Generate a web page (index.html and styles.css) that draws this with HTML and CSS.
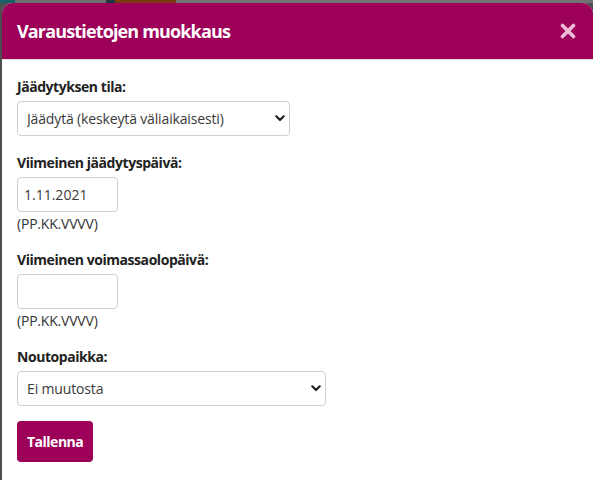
FILE: index.html
```html
<!DOCTYPE html>
<html lang="fi">
<head>
<meta charset="utf-8">
<title>Varaustietojen muokkaus</title>
<link rel="stylesheet" href="styles.css">
</head>
<body>
<div class="modal">
  <div class="modal-header">
    <h4 class="modal-title">Varaustietojen muokkaus</h4>
    <button class="close" type="button" aria-label="Sulje">
      <svg width="16" height="16" viewBox="0 0 16 16"><path d="M2.5 2.5 L13.5 13.5 M13.5 2.5 L2.5 13.5" stroke="currentColor" stroke-width="3.6" stroke-linecap="round"/></svg>
    </button>
  </div>
  <div class="modal-body">
    <div class="field">
      <label class="label">Jäädytyksen tila:</label>
      <div class="select-wrap select-wide">
        <select class="control"><option>Jäädytä (keskeytä väliaikaisesti)</option></select>
        <svg class="chevron" width="10" height="7" viewBox="0 0 10 7"><path d="M1.3 1.3 L5 5 L8.7 1.3" fill="none" stroke="#222" stroke-width="2.2" stroke-linecap="round" stroke-linejoin="round"/></svg>
      </div>
    </div>
    <div class="field">
      <label class="label">Viimeinen jäädytyspäivä:</label>
      <input class="control date" type="text" value="1.11.2021">
      <div class="hint">(PP.KK.VVVV)</div>
    </div>
    <div class="field">
      <label class="label">Viimeinen voimassaolopäivä:</label>
      <input class="control date" type="text" value="">
      <div class="hint">(PP.KK.VVVV)</div>
    </div>
    <div class="field field-last">
      <label class="label">Noutopaikka:</label>
      <div class="select-wrap select-mid">
        <select class="control"><option>Ei muutosta</option></select>
        <svg class="chevron" width="10" height="7" viewBox="0 0 10 7"><path d="M1.3 1.3 L5 5 L8.7 1.3" fill="none" stroke="#222" stroke-width="2.2" stroke-linecap="round" stroke-linejoin="round"/></svg>
      </div>
    </div>
    <button class="btn" type="button">Tallenna</button>
  </div>
</div>
</body>
</html>
```
FILE: styles.css
```css
html, body {
  margin: 0;
  height: 100%;
}
body {
  background:
    linear-gradient(to right, #17606a 0 15px, #6f6f6f 15px 106px, #1d3842 106px 115px, #7b3b12 115px 176px, #727272 176px) top left / 100% 3px no-repeat,
    #4d4d4d;
  font-family: "Open Sans", "Liberation Sans", sans-serif;
  overflow: hidden;
}
.modal {
  margin: 3px 0 0 2px;
  background: #fff;
  border-radius: 11px 11px 0 0;
  overflow: hidden;
  height: 480px;
}
.modal-header {
  height: 57px;
  box-sizing: border-box;
  background: #9c0058;
  border-bottom: 1px solid #e6e6e6;
  display: flex;
  align-items: center;
  justify-content: space-between;
  padding: 0 17px 0 15px;
}
.modal-title {
  margin: 0;
  color: #fff;
  font-size: 18px;
  font-weight: 700;
  line-height: 24px;
  letter-spacing: -0.85px;
}
.close {
  border: 0;
  background: none;
  padding: 0;
  color: #ecbbd8;
  display: flex;
  cursor: pointer;
}
.modal-body {
  padding: 17px 15px;
  color: #222;
}
.field {
  margin-bottom: 17px;
}
.field-last {
  margin-bottom: 15px;
}
.label {
  display: block;
  font-size: 14px;
  font-weight: 700;
  line-height: 20px;
  letter-spacing: -0.45px;
  margin-bottom: 4px;
}
.select-wrap {
  position: relative;
}
.select-wide { width: 273px; }
.select-mid { width: 309px; }
.control {
  box-sizing: border-box;
  height: 35px;
  border: 1px solid #cfcfcf;
  border-radius: 4px;
  background: #fff;
  font-family: inherit;
  font-size: 14px;
  color: #3a3a3a;
  padding: 0 9px;
  margin: 0;
  display: block;
}
select.control {
  width: 100%;
  appearance: none;
  -webkit-appearance: none;
  letter-spacing: -0.15px;
}
.chevron {
  position: absolute;
  right: 5px;
  top: 14px;
  pointer-events: none;
}
.date {
  width: 101px;
  padding: 0 6px;
}
.hint {
  font-size: 14px;
  line-height: 18px;
  color: #333;
  margin-top: 3px;
  letter-spacing: -0.2px;
}
.btn {
  background: #9c0058;
  color: #fff;
  border: 0;
  border-radius: 4px;
  height: 41px;
  padding: 0 10px;
  font-family: inherit;
  font-size: 14px;
  font-weight: 700;
  letter-spacing: -0.5px;
}
```
